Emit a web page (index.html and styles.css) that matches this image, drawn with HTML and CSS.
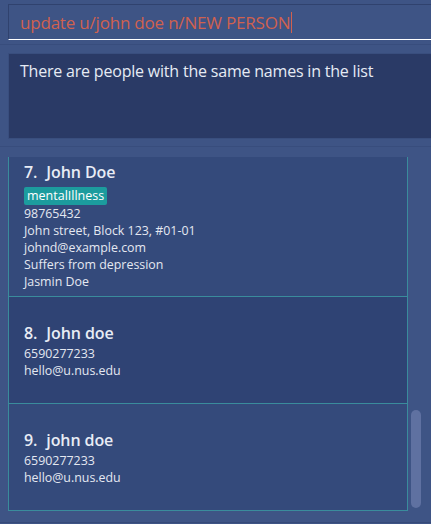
FILE: index.html
```html
<!DOCTYPE html>
<html>
<head>
<meta charset="utf-8">
<link rel="stylesheet" href="styles.css">
</head>
<body>
<div class="app">
  <div class="command-wrap">
    <div class="command"><span class="cmd-text">update u/john doe n/NEW PERSON</span><span class="caret"></span></div>
  </div>
  <div class="sep"></div>
  <div class="result-wrap">
    <div class="result">There are people with the same names in the list</div>
  </div>
  <div class="sep sep2"></div>
  <div class="list-wrap">
    <div class="list">
      <div class="card odd first">
        <div class="name"><span class="idx">7.</span>John Doe</div>
        <div class="tags"><span class="tag">mentalIllness</span></div>
        <div class="line">98765432</div>
        <div class="line">John street, Block 123, #01-01</div>
        <div class="line">johnd@example.com</div>
        <div class="line">Suffers from depression</div>
        <div class="line">Jasmin Doe</div>
      </div>
      <div class="card even">
        <div class="name"><span class="idx">8.</span>John doe</div>
        <div class="line">6590277233</div>
        <div class="line">hello@u.nus.edu</div>
      </div>
      <div class="card odd">
        <div class="name"><span class="idx">9.</span>john doe</div>
        <div class="line">6590277233</div>
        <div class="line">hello@u.nus.edu</div>
      </div>
    </div>
    <div class="scroll-track"><div class="thumb"></div></div>
  </div>
  <div class="bottom-line"></div>
</div>
</body>
</html>
```
FILE: styles.css
```css
html, body {
  margin: 0;
  padding: 0;
  background: #3e5485;
  width: 431px;
  height: 524px;
  overflow: hidden;
  font-family: "Open Sans", "Noto Sans", sans-serif;
}
.app {
  display: flex;
  flex-direction: column;
  height: 524px;
}
.command-wrap {
  padding: 4px 0 0 8px;
}
.command {
  height: 34px;
  border-top: 1px solid #30426e;
  border-left: 1px solid #30426e;
  border-bottom: 1px solid #ffffff;
  display: flex;
  align-items: center;
  padding-left: 11px;
  box-sizing: content-box;
}
.cmd-text {
  color: #d0614f;
  font-size: 17px;
  letter-spacing: -0.2px;
}
.caret {
  display: inline-block;
  width: 1px;
  height: 21px;
  background: #d0614f;
  margin-left: 1px;
}
.sep {
  margin-top: 4px;
  height: 1px;
  background: #384d7d;
}
.result-wrap {
  padding: 8px 0 0 8px;
}
.result {
  height: 78px;
  background: #2a3a66;
  border: 1px solid #394e7e;
  border-right: none;
  color: #e6ebf4;
  font-size: 16px;
  letter-spacing: -0.2px;
  padding: 6px 0 0 11px;
  box-sizing: content-box;
}
.sep2 {
  margin-top: 7px;
}
.list-wrap {
  margin-top: 10px;
  display: flex;
  padding-left: 8px;
}
.list {
  width: 398px;
  border-left: 1px solid #3a8c9c;
  border-right: 1px solid #3a8c9c;
  display: flex;
  flex-direction: column;
}
.card {
  min-height: 106px;
  border-bottom: 1px solid #3a8c9c;
  display: flex;
  flex-direction: column;
  justify-content: center;
  padding: 0 15px;
  color: #e4e8f1;
}
.card.first {
  padding-top: 3px;
  padding-bottom: 6px;
  min-height: 0;
}
.odd { background: #344a7b; }
.even { background: #2f4374; }
.name {
  font-size: 16px;
  font-weight: 600;
  line-height: 24px;
  color: #e8ecf5;
  letter-spacing: -0.1px;
}
.idx {
  margin-right: 9px;
}
.tags {
  margin-top: 3px;
  display: flex;
}
.tag {
  background: #1c9c9e;
  color: #ffffff;
  font-size: 12.5px;
  line-height: 18px;
  padding: 0 3px;
  border-radius: 2px;
}
.line {
  font-size: 12.4px;
  line-height: 17px;
}
.scroll-track {
  width: 23px;
  display: flex;
  flex-direction: column;
  justify-content: flex-end;
  padding-bottom: 3px;
}
.thumb {
  margin-left: 3px;
  width: 10px;
  height: 98px;
  background: #5f71a1;
  border-radius: 5px;
}
.bottom-line {
  margin-top: 11px;
  height: 1px;
  background: #364a78;
}
```
